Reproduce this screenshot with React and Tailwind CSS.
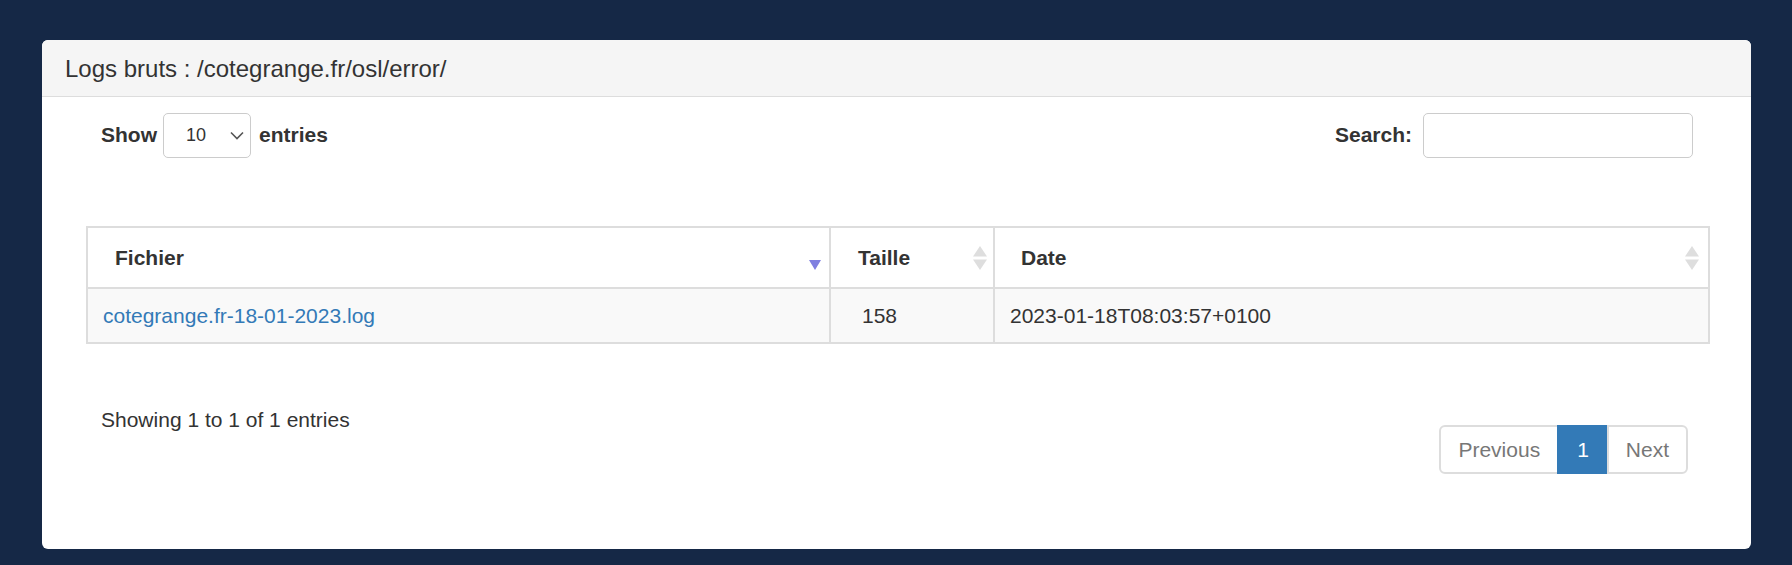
import React from 'react';

const SortBoth = () => (
  <svg width="16" height="24" viewBox="0 0 16 24">
    <polygon points="8,0 15,10.5 1,10.5" fill="#dedede" />
    <polygon points="1,13.5 15,13.5 8,24" fill="#dedede" />
  </svg>
);

const SortDesc = () => (
  <svg width="16" height="24" viewBox="0 0 16 24">
    <polygon points="2,14 14,14 8,24" fill="#7f7fe0" />
  </svg>
);

const App = () => {
  const rows = [{ file: 'cotegrange.fr-18-01-2023.log', size: '158', date: '2023-01-18T08:03:57+0100' }];

  return (
    <div className="min-h-screen bg-[#152846] pt-[40px] pl-[42px] pr-[41px] pb-[16px] font-['Liberation_Sans',Arial,sans-serif] text-[#333]">
      <div className="bg-white rounded-[6px] h-[509px] flex flex-col">
        {/* panel heading */}
        <div className="h-[57px] bg-[#f5f5f5] border-b border-[#dddddd] rounded-t-[6px] flex items-center px-[23px]">
          <h3 className="text-[24px] leading-none text-[#333] mt-[2px]">Logs bruts : /cotegrange.fr/osl/error/</h3>
        </div>

        {/* length + filter */}
        <div className="flex justify-between items-center pt-[16px] pl-[59px] pr-[58px]">
          <div className="flex items-center text-[21px] font-bold">
            <span className="-mt-[2px]">Show</span>
            <div className="ml-[6px] mr-[8px] w-[88px] h-[45px] border border-[#cccccc] rounded-[5px] flex items-center justify-between pl-[22px] pr-[6px]">
              <span className="text-[18px] font-normal text-[#333]">10</span>
              <svg width="14" height="9" viewBox="0 0 14 9">
                <polyline points="1,1.5 7,7.5 13,1.5" fill="none" stroke="#555" strokeWidth="1.6" />
              </svg>
            </div>
            <span className="-mt-[2px]">entries</span>
          </div>
          <div className="flex items-center text-[21px] font-bold">
            <span className="mr-[11px] -mt-[2px]">Search:</span>
            <input
              type="text"
              className="w-[270px] h-[45px] border border-[#cccccc] rounded-[5px] px-[15px] text-[18px] font-normal outline-none"
              aria-label="Search"
            />
          </div>
        </div>

        {/* table */}
        <div className="mt-[68px] pl-[44px] pr-[41px]">
          <table className="w-full table-fixed border-collapse border-2 border-[#dddddd] text-[21px]">
            <colgroup>
              <col className="w-[743px]" />
              <col className="w-[164px]" />
              <col />
            </colgroup>
            <thead>
              <tr className="h-[61px]">
                <th className="border-2 border-[#dddddd] text-left font-bold pl-[27px] pr-[6px] py-0">
                  <div className="flex items-center justify-between">
                    <span>Fichier</span>
                    <SortDesc />
                  </div>
                </th>
                <th className="border-2 border-[#dddddd] text-left font-bold pl-[27px] pr-[5px] py-0">
                  <div className="flex items-center justify-between">
                    <span>Taille</span>
                    <SortBoth />
                  </div>
                </th>
                <th className="border-2 border-[#dddddd] text-left font-bold pl-[26px] pr-[8px] py-0">
                  <div className="flex items-center justify-between">
                    <span>Date</span>
                    <SortBoth />
                  </div>
                </th>
              </tr>
            </thead>
            <tbody>
              {rows.map((row) => (
                <tr key={row.file} className="h-[55px] bg-[#f9f9f9]">
                  <td className="border-2 border-[#dddddd] pl-[15px] py-0">
                    <a href="#" className="text-[#337ab7]">{row.file}</a>
                  </td>
                  <td className="border-2 border-[#dddddd] pl-[31px] py-0">{row.size}</td>
                  <td className="border-2 border-[#dddddd] pl-[15px] py-0">{row.date}</td>
                </tr>
              ))}
            </tbody>
          </table>
        </div>

        {/* info + pagination */}
        <div className="flex justify-between items-start mt-[50px] pl-[59px] pr-[63px]">
          <div className="pt-[11px] text-[21px] leading-[30px]">Showing 1 to 1 of 1 entries</div>
          <ul className="mt-[31px] flex text-[21px] leading-[30px]">
            <li className="h-[49px] px-[17px] flex items-center border-2 border-[#dddddd] rounded-l-[6px] text-[#777]">Previous</li>
            <li className="h-[49px] px-[18px] flex items-center bg-[#337ab7] border-2 border-[#337ab7] text-white -ml-[2px]">1</li>
            <li className="h-[49px] px-[17px] flex items-center border-2 border-[#dddddd] rounded-r-[6px] text-[#777] -ml-[2px]">Next</li>
          </ul>
        </div>
      </div>
    </div>
  );
};

export default App;
